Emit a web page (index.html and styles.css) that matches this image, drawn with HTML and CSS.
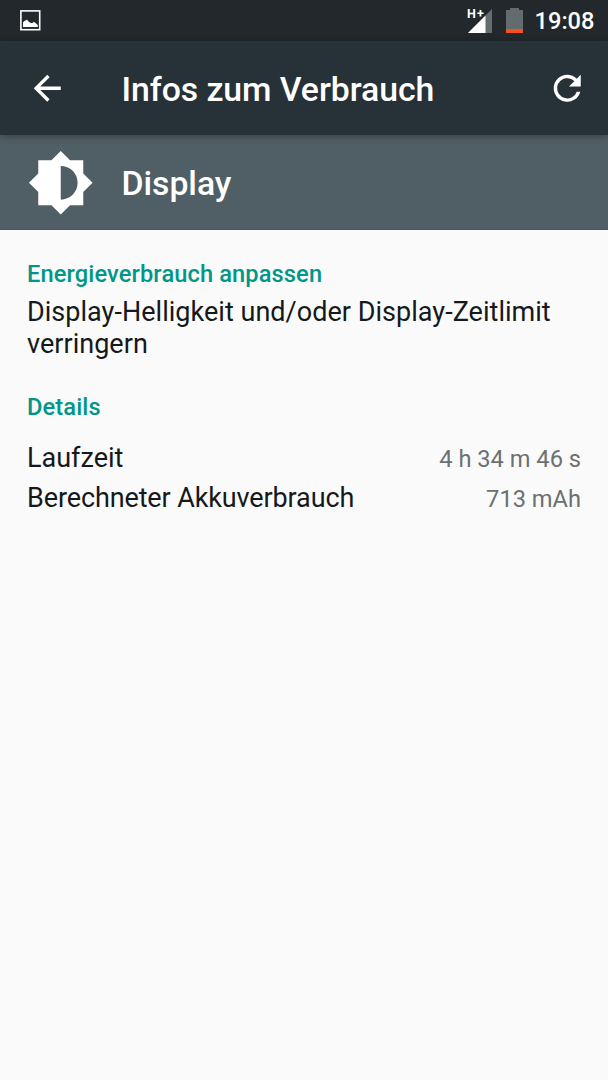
FILE: index.html
```html
<!DOCTYPE html>
<html lang="de">
<head>
<meta charset="utf-8">
<title>Infos zum Verbrauch</title>
<link rel="stylesheet" href="styles.css">
</head>
<body>
<header class="statusbar">
  <svg class="picture-icon" viewBox="0 0 21 21"><rect x=".9" y=".9" width="18.8" height="18.8" fill="none" stroke="#fff" stroke-width="1.6"/><path d="M3 17v-4.7l2-1.8h1l1-1 2 2.5 2 1h1l2-1 1 .5 2.8 2.5v2z" fill="#fff"/></svg>
  <div class="status-right">
    <div class="signal">
      <svg viewBox="0 0 24 24"><path d="M24 0v24H0z" fill="#666d71"/><path d="M17.5 6.5V24H0z" fill="#fff"/></svg>
      <span class="network">H+</span>
    </div>
    <svg class="battery" viewBox="0 0 17 25"><path d="M4 0h9v2h4v19H0V2h4z" fill="#646b6e"/><path d="M0 21h17v4H0z" fill="#f4511e"/></svg>
    <span class="clock">19:08</span>
  </div>
</header>
<div class="toolbar">
  <svg class="action" viewBox="0 0 24 24"><path d="M20 11H7.83l5.59-5.59L12 4l-8 8 8 8 1.41-1.41L7.83 13H20z"/></svg>
  <h1 class="title">Infos zum Verbrauch</h1>
  <svg class="action" viewBox="0 0 24 24"><path d="M17.65 6.35A7.96 7.96 0 0 0 12 4a8 8 0 1 0 7.73 10h-2.08A6 6 0 1 1 12 6c1.66 0 3.14.69 4.22 1.78L13 11h7V4z"/></svg>
</div>
<section class="entity">
  <svg class="brightness" viewBox="0 0 24 24"><path d="M20 15.31L23.31 12 20 8.69V4h-4.69L12 .69 8.69 4H4v4.69L.69 12 4 15.31V20h4.69L12 23.31 15.31 20H20zM12 18V6a6 6 0 0 1 0 12z"/></svg>
  <h2 class="title">Display</h2>
</section>
<main class="content">
  <h3 class="category">Energieverbrauch anpassen</h3>
  <p class="hint">Display-Helligkeit und/oder Display-Zeitlimit verringern</p>
  <h3 class="category details">Details</h3>
  <dl class="rows">
    <div class="row"><dt>Laufzeit</dt><dd>4 h 34 m 46 s</dd></div>
    <div class="row"><dt class="tight">Berechneter Akkuverbrauch</dt><dd>713 mAh</dd></div>
  </dl>
</main>
</body>
</html>
```
FILE: styles.css
```css
* { box-sizing: border-box; margin: 0; padding: 0; }
body { min-height: 1080px; background: #fafafa; color: #15191b; font-family: Roboto, sans-serif; }
svg { display: block; flex: none; }
h1, h2, h3 { font-weight: 500; }

.statusbar { height: 41px; background: #22282b; padding: 0 13.5px 0 20px; display: flex; align-items: center; justify-content: space-between; }
.picture-icon { width: 21px; height: 21px; }
.status-right { display: flex; align-items: center; color: #fff; }
.signal { position: relative; width: 24px; height: 24px; margin-right: 14px; }
.signal svg { width: 24px; height: 24px; }
.network { position: absolute; left: -1px; top: -1px; font-size: 12.5px; line-height: 12px; font-weight: 700; letter-spacing: 1.2px; }
.battery { width: 17px; height: 25px; margin-right: 11.5px; }
.clock { font-size: 23.65px; line-height: 40px; padding-top: 1px; font-weight: 500; }

.toolbar { position: relative; height: 94px; padding: 0 21px 0 27px; background: #273238; color: #fff; display: flex; align-items: center; box-shadow: 0 1px 7px rgba(0, 0, 0, .35); }
.action { width: 40.5px; height: 40.5px; fill: #fff; }
.toolbar .title { flex: 1; margin-left: 54px; }
.title { font-size: 33.8px; line-height: 40px; padding-top: 4px; letter-spacing: -.06px; color: #fff; }

.entity { height: 95px; padding-left: 27px; background: #505e65; border-bottom: 1px solid #44545b; display: flex; align-items: center; }
.brightness { width: 67.5px; height: 67.5px; margin-top: 1px; fill: #fff; }
.entity .title { margin-left: 27px; }

.content { padding: 30px 27px 0; }
.category { font-size: 23.65px; line-height: 28px; letter-spacing: .11px; color: #009688; }
.hint { margin-top: 8px; font-size: 27px; line-height: 32px; letter-spacing: .03px; }
.details { margin-top: 33px; }
.rows { margin-top: 17px; }
.row { height: 40px; display: flex; justify-content: space-between; align-items: baseline; font-size: 27px; line-height: 40px; }
.row .tight { letter-spacing: -.12px; }
.row dd { font-size: 23.65px; color: #6c7071; }
```
